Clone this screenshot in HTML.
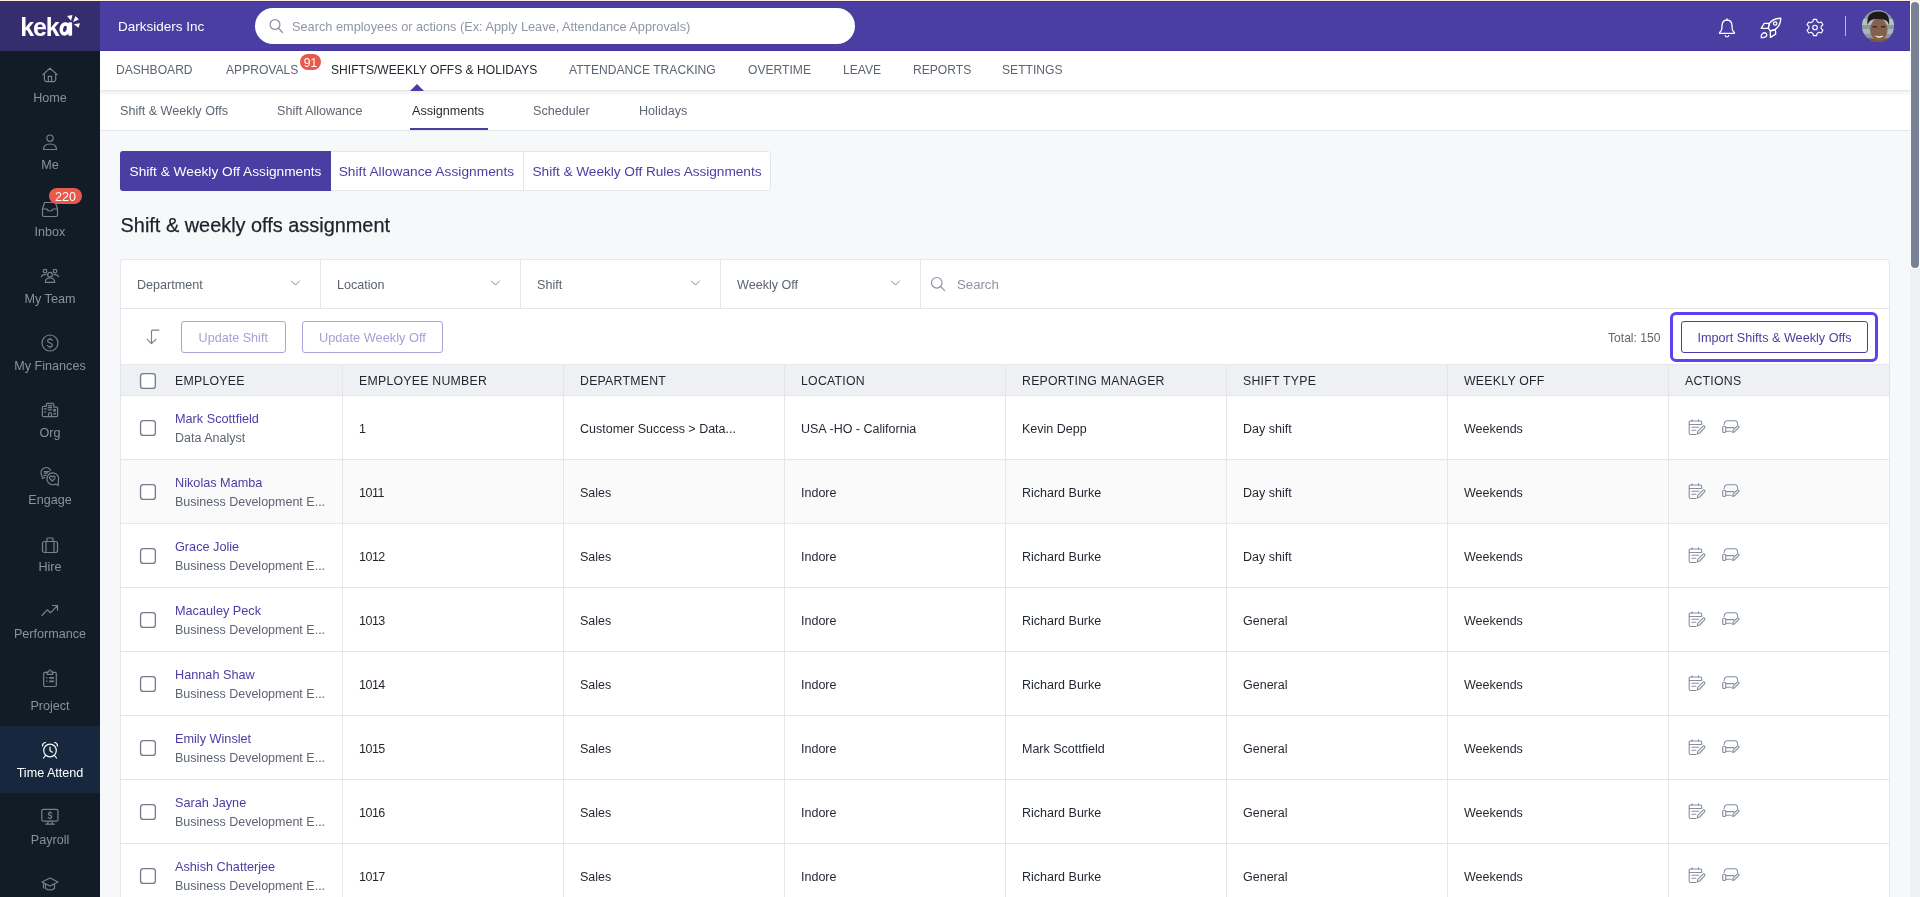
<!DOCTYPE html>
<html><head><meta charset="utf-8"><title>Keka</title>
<style>
html,body{margin:0;padding:0;}
body{width:1920px;height:897px;overflow:hidden;position:relative;background:#f7f8fa;font-family:"Liberation Sans", sans-serif;}
.t{position:absolute;white-space:nowrap;line-height:1;font-family:"Liberation Sans", sans-serif;}
</style></head><body>
<div id="root" style="position:absolute;left:0;top:0;width:1920px;height:897px;will-change:transform">
<div style="position:absolute;left:0;top:0;width:1920px;height:1px;background:#feeee2"></div>
<div style="position:absolute;left:0;top:1px;width:1910px;height:50px;background:#4b3ea2"></div>
<div style="position:absolute;left:0;top:1px;width:1910px;height:1px;background:#3f349c"></div>
<div style="position:absolute;left:100px;top:50px;width:1810px;height:1px;background:#4235a0"></div>
<div style="position:absolute;left:0;top:1px;width:100px;height:50px;background:#362d6f"></div>
<svg style="position:absolute;left:0;top:0" width="100" height="51" viewBox="0 0 100 51">
<g font-family="Liberation Sans" font-weight="bold" font-size="25" fill="#fff">
<text x="20.2" y="35.75">k</text><text x="32.9" y="35.75">e</text><text x="45.8" y="35.75">k</text></g>
<ellipse cx="64.9" cy="28.9" rx="3.55" ry="5.0" transform="rotate(12 64.9 28.9)" fill="none" stroke="#fff" stroke-width="3.6"/><rect x="68.3" y="22.3" width="3.8" height="13.45" rx="1" fill="#fff"/>
<path d="M67.1 16.1 L72.5 15 L71 20.8 Z M75.5 15.9 L78.9 19.6 L73 22 Z M73.7 24.2 L79.9 23.2 L78.6 27.7 Z" fill="#fff"/>
</svg>
<div class="t" style="left:118px;top:19.57px;font-size:13.5px;color:#ffffff;">Darksiders Inc</div>
<div style="position:absolute;left:255px;top:8px;width:600px;height:36px;border-radius:18px;background:#fff"></div>
<svg style="position:absolute;left:268px;top:18px" width="16" height="16" viewBox="0 0 16 16"><circle cx="7" cy="6.5" r="4.9" fill="none" stroke="#8a93a0" stroke-width="1.25"/><path d="M10.6 10.3 L14.5 14.5" stroke="#8a93a0" stroke-width="1.3" stroke-linecap="round"/></svg>
<div class="t" style="left:292px;top:21.01px;font-size:12.75px;color:#8f97a3;">Search employees or actions (Ex: Apply Leave, Attendance Approvals)</div>
<svg style="position:absolute;left:1716px;top:16px" width="22" height="24" viewBox="0 0 22 24" fill="none" stroke="#fff" stroke-width="1.3" stroke-linejoin="round" stroke-linecap="round">
<path d="M11 4 C7.8 4 6.2 6.5 6 9.5 L5.8 13 C5.6 14.5 4.5 15.5 3.6 16.5 Q3.2 17.4 4.2 17.4 L17.8 17.4 Q18.8 17.4 18.4 16.5 C17.5 15.5 16.4 14.5 16.2 13 L16 9.5 C15.8 6.5 14.2 4 11 4 Z"/><path d="M11 2.8 L11 4"/><path d="M9.2 19.6 A1.9 1.9 0 0 0 12.8 19.6"/></svg>
<svg style="position:absolute;left:1759px;top:15px" width="24" height="24" viewBox="0 0 24 24" fill="none" stroke="#fff" stroke-width="1.3" stroke-linejoin="round">
<path d="M10.4 8.3 Q14 3.5 21.8 3.2 Q21.5 11 16.2 14.4 L11.5 15.8 L9.3 13.4 Z"/><circle cx="16.2" cy="8.5" r="1.7"/>
<path d="M2.2 13.4 L5.2 8.4 L10.4 8.4 L9.3 13.4 Z"/><path d="M11.4 22.4 L11.3 16 L16.4 14.6 L16.7 19.1 Z"/>
<path d="M2.2 22.6 Q2 19.5 3.5 18.5 Q5.5 17 7.3 18.5 Q8.5 20 7.2 21.5 Q5.5 22.8 2.2 22.6 Z"/></svg>
<svg style="position:absolute;left:1804px;top:16.3px" width="22" height="22" viewBox="0 0 22 22" fill="none" stroke="#fff" stroke-width="1.3" stroke-linejoin="round"><g transform="translate(11 11.5) scale(0.88) translate(-11 -11.5)">
<path d="M9.2 2.2 L12.8 2.2 L13.4 4.8 L15.6 6.1 L18.2 5.3 L20 8.4 L18 10.2 L18 12.8 L20 14.6 L18.2 17.7 L15.6 16.9 L13.4 18.2 L12.8 20.8 L9.2 20.8 L8.6 18.2 L6.4 16.9 L3.8 17.7 L2 14.6 L4 12.8 L4 10.2 L2 8.4 L3.8 5.3 L6.4 6.1 L8.6 4.8 Z"/><circle cx="11" cy="11.5" r="2.6"/></g></svg>
<div style="position:absolute;left:1845px;top:16px;width:1px;height:20px;background:#b9b3e0"></div>
<svg style="position:absolute;left:1862px;top:10px" width="32" height="32" viewBox="0 0 32 32">
<defs><clipPath id="av"><circle cx="16" cy="16" r="16"/></clipPath></defs>
<g clip-path="url(#av)"><rect width="32" height="32" fill="#8a9aa3"/><rect y="9" width="32" height="6" fill="#b3c0c4"/><rect y="19" width="32" height="5" fill="#a9b7bb"/>
<path d="M0 32 L1 29 C5 27.5 10 28.5 16 29 C22 28.5 27 27.5 31 29 L32 32 Z" fill="#8a4f35"/>
<ellipse cx="16.8" cy="19.5" rx="8.8" ry="11" fill="#86604e"/>
<path d="M5.5 15 C4.5 5 9 1.5 16.5 1.5 C24 1.5 28 5 27 15 C26 12 25 10 21 9.5 C17 8.5 12 9 9.5 10 C7.5 11 6.5 12.5 5.5 15 Z" fill="#1d1a19"/>
<path d="M13.6 26.2 Q17.3 28.6 21 26.2 Q17.3 27.2 13.6 26.2 Z" fill="#efe8e2" stroke="#efe8e2" stroke-width="0.8"/>
<rect x="10.5" y="16" width="4.5" height="1.5" fill="#3b2a22"/><rect x="19" y="16" width="4.5" height="1.5" fill="#3b2a22"/>
</g></svg>
<div style="position:absolute;left:1910px;top:1px;width:10px;height:896px;background:#eef0f3"></div>
<div style="position:absolute;left:1910px;top:1px;width:10px;height:268px;background:#fcfcfd"></div>
<div style="position:absolute;left:1911px;top:2px;width:8px;height:266px;border-radius:4px;background:#798295"></div>
<div style="position:absolute;left:0;top:51px;width:100px;height:846px;background:#111c27"></div>
<div style="position:absolute;left:0;top:726px;width:100px;height:67px;background:#17283e"></div>
<svg style="position:absolute;left:36px;top:62px;color:#78818d" width="28" height="28" viewBox="0 0 28 28" fill="none" stroke="#78818d" stroke-width="1.2" stroke-linecap="round" stroke-linejoin="round"><path d="M6.8 12.6 L13.9 6.2 L21.2 12.6 M8.4 11.2 L8.4 18.2 L9.9 19.7 L18.2 19.7 L19.7 18.2 L19.7 11.2 M12.3 19.7 L12.3 14.3 L15.6 14.3 L15.6 19.7"/></svg>
<div class="t" style="left:0;width:100px;text-align:center;top:92.43px;font-size:12.6px;color:#8a929c">Home</div>
<svg style="position:absolute;left:41px;top:133px" width="18" height="18" viewBox="0 0 18 18" fill="none" stroke="#78818d" stroke-width="1.2" stroke-linecap="round" stroke-linejoin="round"><circle cx="9" cy="5.2" r="3.2"/><path d="M2.5 16.5 C2.5 12.5 5 11 9 11 C13 11 15.5 12.5 15.5 16.5 Z"/></svg>
<div class="t" style="left:0;width:100px;text-align:center;top:158.93px;font-size:12.6px;color:#8a929c">Me</div>
<svg style="position:absolute;left:41px;top:200px" width="18" height="18" viewBox="0 0 18 18" fill="none" stroke="#78818d" stroke-width="1.2" stroke-linecap="round" stroke-linejoin="round"><path d="M3.5 2.5 L14.5 2.5 L16.5 9 L16.5 15 Q16.5 16.5 15 16.5 L3 16.5 Q1.5 16.5 1.5 15 L1.5 9 Z M1.5 9 L6 9 Q6.5 11 9 11 Q11.5 11 12 9 L16.5 9"/></svg>
<div class="t" style="left:0;width:100px;text-align:center;top:225.93px;font-size:12.6px;color:#8a929c">Inbox</div>
<svg style="position:absolute;left:36px;top:262px;color:#78818d" width="28" height="28" viewBox="0 0 28 28" fill="none" stroke="#78818d" stroke-width="1.2" stroke-linecap="round" stroke-linejoin="round"><circle cx="9" cy="9.1" r="1.8"/><circle cx="19" cy="9.1" r="1.8"/><circle cx="14" cy="12.8" r="2.4"/><path d="M9.3 20.3 C9.3 17.5 11.5 16 14 16 C16.5 16 18.7 17.5 18.7 20.3 Z"/><path d="M5.4 14.6 Q6.5 12.3 10 12.3 M22.6 14.6 Q21.5 12.3 18 12.3"/></svg>
<div class="t" style="left:0;width:100px;text-align:center;top:292.93px;font-size:12.6px;color:#8a929c">My Team</div>
<svg style="position:absolute;left:41px;top:334px" width="18" height="18" viewBox="0 0 18 18" fill="none" stroke="#78818d" stroke-width="1.2" stroke-linecap="round" stroke-linejoin="round"><circle cx="9" cy="9" r="8"/><path d="M11.3 6.3 C10.8 5.5 10 5.2 9 5.2 C7.5 5.2 6.6 6 6.6 7 C6.6 9.6 11.4 8.4 11.4 11 C11.4 12.1 10.4 12.8 9 12.8 C7.8 12.8 6.9 12.3 6.5 11.5 M9 4 L9 5.2 M9 12.8 L9 14"/></svg>
<div class="t" style="left:0;width:100px;text-align:center;top:359.93px;font-size:12.6px;color:#8a929c">My Finances</div>
<svg style="position:absolute;left:36px;top:396px;color:#78818d" width="28" height="28" viewBox="0 0 28 28" fill="none" stroke="#78818d" stroke-width="1.2" stroke-linecap="round" stroke-linejoin="round"><path d="M6.4 19.5 L6.4 11.4 Q6.4 10.3 7.5 10.3 L10.3 10.3 L10.3 8.4 Q10.3 7.3 11.4 7.3 L16.7 7.3 Q17.8 7.3 17.8 8.4 L17.8 11.1 L20.5 11.1 Q21.6 11.1 21.6 12.2 L21.6 19.5 Q21.6 20.6 20.5 20.6 L7.5 20.6 Q6.4 20.6 6.4 19.5 Z"/><path d="M12.5 20.6 L12.5 18.2 Q12.5 16.6 14 16.6 Q15.5 16.6 15.5 18.2 L15.5 20.6"/><path d="M12.2 9.6 L15.8 9.6 M12.2 11.7 L15.8 11.7 M12.2 13.8 L15.8 13.8"/><path d="M8.4 12.6 Q9.3 13.8 10.3 12.6 M8.3 16 L10 16"/><circle cx="18.6" cy="14.3" r="0.9"/><path d="M17.7 17.5 Q18.7 18.7 19.7 17.5"/></svg>
<div class="t" style="left:0;width:100px;text-align:center;top:426.93px;font-size:12.6px;color:#8a929c">Org</div>
<svg style="position:absolute;left:36px;top:462px;color:#78818d" width="28" height="28" viewBox="0 0 28 28" fill="none" stroke="#78818d" stroke-width="1.2" stroke-linecap="round" stroke-linejoin="round"><path d="M14.7 8.4 A5.1 5.1 0 1 0 5.9 13.5 L6.4 16.4 L8.8 15.3"/><path d="M8.3 9.7 L13 9.7 M8.3 11.1 L11.5 11.1 M8 13.4 L10 13.4"/><path d="M22.3 19 A5.9 5.9 0 1 0 19.8 21.9 L22.3 23.6 Z"/><path d="M16.3 19 L13.9 16.6 Q13 15.4 14 14.4 Q15.2 13.6 16.3 14.8 Q17.4 13.6 18.6 14.4 Q19.6 15.4 18.7 16.6 Z"/></svg>
<div class="t" style="left:0;width:100px;text-align:center;top:493.93px;font-size:12.6px;color:#8a929c">Engage</div>
<svg style="position:absolute;left:41px;top:536px" width="18" height="18" viewBox="0 0 18 18" fill="none" stroke="#78818d" stroke-width="1.2" stroke-linecap="round" stroke-linejoin="round"><rect x="1.5" y="5.5" width="15" height="11" rx="2"/><path d="M6 5.5 L6 2.8 Q6 2 6.8 2 L11.2 2 Q12 2 12 2.8 L12 5.5 M5 5.5 L5 16.5 M13 5.5 L13 16.5"/></svg>
<div class="t" style="left:0;width:100px;text-align:center;top:560.93px;font-size:12.6px;color:#8a929c">Hire</div>
<svg style="position:absolute;left:41px;top:604px" width="18" height="18" viewBox="0 0 18 18" fill="none" stroke="#78818d" stroke-width="1.2" stroke-linecap="round" stroke-linejoin="round"><path d="M1 11.5 L6.2 5.8 L9.5 8.8 L16.2 1.8 M11.6 1.5 L16.5 1.5 L16.5 6.3"/></svg>
<div class="t" style="left:0;width:100px;text-align:center;top:627.93px;font-size:12.6px;color:#8a929c">Performance</div>
<svg style="position:absolute;left:36px;top:662px;color:#78818d" width="28" height="28" viewBox="0 0 28 28" fill="none" stroke="#78818d" stroke-width="1.2" stroke-linecap="round" stroke-linejoin="round"><path d="M11 10.3 L8.9 10.3 Q7.7 10.3 7.7 11.5 L7.7 23.3 Q7.7 24.5 8.9 24.5 L19.1 24.5 Q20.3 24.5 20.3 23.3 L20.3 11.5 Q20.3 10.3 19.1 10.3 L17 10.3"/><path d="M11.2 12.3 L11.2 10.6 Q11.2 9.9 11.9 9.9 L12.6 9.9 Q12.7 8 14 8 Q15.3 8 15.4 9.9 L16.1 9.9 Q16.8 9.9 16.8 10.6 L16.8 12.3 Z"/><rect x="10.2" y="15.2" width="1.3" height="1.3" fill="currentColor" stroke="none"/><rect x="10.2" y="18.6" width="1.3" height="1.3" fill="currentColor" stroke="none"/><path d="M13.2 15.9 L17.9 15.9 M13.2 19.3 L17.9 19.3" stroke-width="1.7" stroke-linecap="butt"/></svg>
<div class="t" style="left:0;width:100px;text-align:center;top:699.93px;font-size:12.6px;color:#8a929c">Project</div>
<svg style="position:absolute;left:41px;top:741px" width="18" height="18" viewBox="0 0 18 18" fill="none" stroke="#ffffff" stroke-width="1.2" stroke-linecap="round" stroke-linejoin="round"><circle cx="9" cy="9.5" r="6.3"/><path d="M9 6.2 L9 9.8 L11.4 11.2 M1.5 5 Q1.5 1.8 4.5 1.5 M16.5 5 Q16.5 1.8 13.5 1.5 M4.5 14.5 L2.5 17 M13.5 14.5 L15.5 17"/></svg>
<div class="t" style="left:0;width:100px;text-align:center;top:766.93px;font-size:12.6px;color:#ffffff">Time Attend</div>
<svg style="position:absolute;left:36px;top:802px;color:#78818d" width="28" height="28" viewBox="0 0 28 28" fill="none" stroke="#78818d" stroke-width="1.2" stroke-linecap="round" stroke-linejoin="round"><rect x="5.8" y="7.3" width="16.2" height="11.9" rx="1.6"/><path d="M12.4 19.4 L11.4 21.9 M15.6 19.4 L16.6 21.9 M9.6 22.2 L18.4 22.2"/><path d="M15.7 11.4 Q15 10.6 14 10.6 Q12.3 10.6 12.3 11.9 Q12.3 13 14 13.3 Q15.8 13.6 15.8 14.9 Q15.8 16.2 14 16.2 Q12.9 16.2 12.2 15.4 M14 9.7 L14 10.6 M14 16.2 L14 17.1"/></svg>
<div class="t" style="left:0;width:100px;text-align:center;top:833.93px;font-size:12.6px;color:#8a929c">Payroll</div>
<svg style="position:absolute;left:41px;top:876px" width="18" height="18" viewBox="0 0 18 18" fill="none" stroke="#78818d" stroke-width="1.2" stroke-linecap="round" stroke-linejoin="round"><path d="M1 6 L9 2 L17 6 L9 10 Z M4.5 8 L4.5 12.5 Q9 15.5 13.5 12.5 L13.5 8 M2.5 7 L2.5 12"/></svg>
<div style="position:absolute;left:49px;top:188px;width:33px;height:16px;border-radius:8px;background:#e8594c"></div>
<div class="t" style="left:49px;width:33px;text-align:center;top:191.12px;font-size:12.5px;color:#fff">220</div>
<div style="position:absolute;left:100px;top:51px;width:1810px;height:39px;background:#fff"></div>
<div style="position:absolute;left:100px;top:90px;width:1810px;height:1px;background:#e4e6ea"></div>
<div style="position:absolute;left:100px;top:91px;width:1810px;height:40px;background:#fff"></div>
<div style="position:absolute;left:100px;top:91px;width:1810px;height:5px;background:linear-gradient(#eef0f3,rgba(255,255,255,0))"></div>
<div style="position:absolute;left:100px;top:130px;width:1810px;height:1px;background:#e4e6ea"></div>
<div class="t" style="left:116px;top:64.06px;font-size:12.1px;color:#5b6573;">DASHBOARD</div>
<div class="t" style="left:226px;top:64.06px;font-size:12.1px;color:#5b6573;">APPROVALS</div>
<div class="t" style="left:331px;top:64.06px;font-size:12.1px;color:#242a32;">SHIFTS/WEEKLY OFFS &amp; HOLIDAYS</div>
<div class="t" style="left:569px;top:64.06px;font-size:12.1px;color:#5b6573;">ATTENDANCE TRACKING</div>
<div class="t" style="left:748px;top:64.06px;font-size:12.1px;color:#5b6573;">OVERTIME</div>
<div class="t" style="left:843px;top:64.06px;font-size:12.1px;color:#5b6573;">LEAVE</div>
<div class="t" style="left:913px;top:64.06px;font-size:12.1px;color:#5b6573;">REPORTS</div>
<div class="t" style="left:1002px;top:64.06px;font-size:12.1px;color:#5b6573;">SETTINGS</div>
<div style="position:absolute;left:300px;top:54px;width:21px;height:16px;border-radius:8px;background:#e8584b"></div>
<div class="t" style="left:300px;width:21px;text-align:center;top:56.84px;font-size:12px;color:#fff">91</div>
<svg style="position:absolute;left:410px;top:84px" width="14" height="7" viewBox="0 0 14 7"><path d="M0 7 L7 0 L14 7 Z" fill="#4b3ea2"/></svg>
<div class="t" style="left:120px;top:105.13px;font-size:12.6px;color:#5d6673;">Shift &amp; Weekly Offs</div>
<div class="t" style="left:277px;top:105.13px;font-size:12.6px;color:#5d6673;">Shift Allowance</div>
<div class="t" style="left:412px;top:105.13px;font-size:12.6px;color:#1f262e;">Assignments</div>
<div class="t" style="left:533px;top:105.13px;font-size:12.6px;color:#5d6673;">Scheduler</div>
<div class="t" style="left:639px;top:105.13px;font-size:12.6px;color:#5d6673;">Holidays</div>
<div style="position:absolute;left:410px;top:128px;width:78px;height:2px;background:#4b3ea2"></div>
<div style="position:absolute;left:120px;top:151px;width:649px;height:38px;border:1px solid #e4e6ea;border-radius:3px;background:#fff"></div>
<div style="position:absolute;left:120px;top:151px;width:211px;height:40px;border-radius:3px 0 0 3px;background:#4b3ea2"></div>
<div style="position:absolute;left:523px;top:152px;width:1px;height:38px;background:#e4e6ea"></div>
<div class="t" style="left:129.5px;top:164.70px;font-size:13.7px;color:#ffffff;">Shift &amp; Weekly Off Assignments</div>
<div class="t" style="left:338.7px;top:164.70px;font-size:13.7px;color:#4b3ea2;letter-spacing:0.05px;">Shift Allowance Assignments</div>
<div class="t" style="left:532.5px;top:164.70px;font-size:13.7px;color:#4b3ea2;letter-spacing:-0.05px;">Shift &amp; Weekly Off Rules Assignments</div>
<div class="t" style="left:120.6px;top:216.35px;font-size:19.9px;color:#1b222b;-webkit-text-stroke:0.25px #1b222b;">Shift &amp; weekly offs assignment</div>
<div style="position:absolute;left:120px;top:259px;width:1768px;height:700px;border:1px solid #e4e6ea;border-radius:3px;background:#fff"></div>
<div style="position:absolute;left:121px;top:308px;width:1768px;height:1px;background:#e4e6ea"></div>
<div style="position:absolute;left:320px;top:260px;width:1px;height:48px;background:#e4e6ea"></div>
<div style="position:absolute;left:520px;top:260px;width:1px;height:48px;background:#e4e6ea"></div>
<div style="position:absolute;left:720px;top:260px;width:1px;height:48px;background:#e4e6ea"></div>
<div style="position:absolute;left:920px;top:260px;width:1px;height:48px;background:#e4e6ea"></div>
<div class="t" style="left:137px;top:278.73px;font-size:12.6px;color:#5b6470;">Department</div>
<svg style="position:absolute;left:290px;top:279px" width="11" height="8" viewBox="0 0 11 8"><path d="M1.5 2 L5.5 6 L9.5 2" fill="none" stroke="#7a8390" stroke-width="1.0" stroke-linecap="round" stroke-linejoin="round"/></svg>
<div class="t" style="left:337px;top:278.73px;font-size:12.6px;color:#5b6470;">Location</div>
<svg style="position:absolute;left:490px;top:279px" width="11" height="8" viewBox="0 0 11 8"><path d="M1.5 2 L5.5 6 L9.5 2" fill="none" stroke="#7a8390" stroke-width="1.0" stroke-linecap="round" stroke-linejoin="round"/></svg>
<div class="t" style="left:537px;top:278.73px;font-size:12.6px;color:#5b6470;">Shift</div>
<svg style="position:absolute;left:690px;top:279px" width="11" height="8" viewBox="0 0 11 8"><path d="M1.5 2 L5.5 6 L9.5 2" fill="none" stroke="#7a8390" stroke-width="1.0" stroke-linecap="round" stroke-linejoin="round"/></svg>
<div class="t" style="left:737px;top:278.73px;font-size:12.6px;color:#5b6470;">Weekly Off</div>
<svg style="position:absolute;left:890px;top:279px" width="11" height="8" viewBox="0 0 11 8"><path d="M1.5 2 L5.5 6 L9.5 2" fill="none" stroke="#7a8390" stroke-width="1.0" stroke-linecap="round" stroke-linejoin="round"/></svg>
<svg style="position:absolute;left:930px;top:276px" width="16" height="16" viewBox="0 0 16 16"><circle cx="6.8" cy="6.8" r="5.3" fill="none" stroke="#8a93a0" stroke-width="1.2"/><path d="M10.7 10.7 L14.6 14.6" stroke="#8a93a0" stroke-width="1.2" stroke-linecap="round"/></svg>
<div class="t" style="left:957px;top:278.23px;font-size:13.2px;color:#8a93a0;">Search</div>
<svg style="position:absolute;left:138px;top:322px" width="30" height="30" viewBox="0 0 30 30" fill="none" stroke="#748093" stroke-width="1.15" stroke-linecap="round" stroke-linejoin="round"><path d="M20.9 8.1 L14.8 8.1 Q13.5 8.1 13.5 9.4 L13.5 21.6 M9.2 17.4 L13.5 21.7 L17.9 17.4"/></svg>
<div style="position:absolute;left:181px;top:321px;width:103px;height:30px;border:1px solid #aaa4da;border-radius:3px"></div>
<div class="t" style="left:198.6px;top:331.73px;font-size:12.6px;color:#a6a0d8;">Update Shift</div>
<div style="position:absolute;left:302px;top:321px;width:139px;height:30px;border:1px solid #aaa4da;border-radius:3px"></div>
<div class="t" style="left:318.9px;top:331.56px;font-size:12.8px;color:#a6a0d8;">Update Weekly Off</div>
<div class="t" style="left:1608px;top:332.16px;font-size:12.1px;color:#5f6670;">Total: 150</div>
<div style="position:absolute;left:1670px;top:312px;width:202px;height:44px;border:3px solid #5b43f2;border-radius:6px"></div>
<div style="position:absolute;left:1681px;top:321px;width:185px;height:30px;border:1px solid #4b3ea2;border-radius:3px"></div>
<div class="t" style="left:1697.5px;top:331.69px;font-size:12.65px;color:#4b3ea2;">Import Shifts &amp; Weekly Offs</div>
<div style="position:absolute;left:121px;top:365px;width:1768px;height:30px;background:#eef0f4"></div>
<div style="position:absolute;left:121px;top:395px;width:1768px;height:1px;background:#e4e6ea"></div>
<div style="position:absolute;left:120px;top:364px;width:1769px;height:1px;background:#e6e8ec"></div>
<div class="t" style="left:175px;top:374.79px;font-size:12.3px;color:#1e252d;letter-spacing:0.25px;">EMPLOYEE</div>
<div class="t" style="left:359px;top:374.79px;font-size:12.3px;color:#1e252d;letter-spacing:0.25px;">EMPLOYEE NUMBER</div>
<div class="t" style="left:580px;top:374.79px;font-size:12.3px;color:#1e252d;letter-spacing:0.25px;">DEPARTMENT</div>
<div class="t" style="left:801px;top:374.79px;font-size:12.3px;color:#1e252d;letter-spacing:0.25px;">LOCATION</div>
<div class="t" style="left:1022px;top:374.79px;font-size:12.3px;color:#1e252d;letter-spacing:0.25px;">REPORTING MANAGER</div>
<div class="t" style="left:1243px;top:374.79px;font-size:12.3px;color:#1e252d;letter-spacing:0.25px;">SHIFT TYPE</div>
<div class="t" style="left:1464px;top:374.79px;font-size:12.3px;color:#1e252d;letter-spacing:0.25px;">WEEKLY OFF</div>
<div class="t" style="left:1685px;top:374.79px;font-size:12.3px;color:#1e252d;letter-spacing:0.25px;">ACTIONS</div>
<div style="position:absolute;left:121px;top:459px;width:1768px;height:64px;background:#fafafb"></div>
<div style="position:absolute;left:342px;top:365px;width:1px;height:532px;background:#e4e6ea"></div>
<div style="position:absolute;left:563px;top:365px;width:1px;height:532px;background:#e4e6ea"></div>
<div style="position:absolute;left:784px;top:365px;width:1px;height:532px;background:#e4e6ea"></div>
<div style="position:absolute;left:1005px;top:365px;width:1px;height:532px;background:#e4e6ea"></div>
<div style="position:absolute;left:1226px;top:365px;width:1px;height:532px;background:#e4e6ea"></div>
<div style="position:absolute;left:1447px;top:365px;width:1px;height:532px;background:#e4e6ea"></div>
<div style="position:absolute;left:1668px;top:365px;width:1px;height:532px;background:#e4e6ea"></div>
<svg style="position:absolute;left:139px;top:372px" width="18" height="18" viewBox="0 0 18 18"><rect x="1.55" y="1.6" width="14.8" height="14.8" rx="2.7" fill="#fff" stroke="#737d8e" stroke-width="1.35"/></svg>
<div style="position:absolute;left:121px;top:459px;width:1768px;height:1px;background:#e4e6ea"></div>
<svg style="position:absolute;left:139px;top:419px" width="18" height="18" viewBox="0 0 18 18"><rect x="1.55" y="1.6" width="14.8" height="14.8" rx="2.7" fill="#fff" stroke="#737d8e" stroke-width="1.35"/></svg>
<div class="t" style="left:175px;top:412.65px;font-size:12.7px;color:#4b3ea2;">Mark Scottfield</div>
<div class="t" style="left:175px;top:431.62px;font-size:12.5px;color:#5d6570;">Data Analyst</div>
<div class="t" style="left:359px;top:422.82px;font-size:12.5px;color:#1f2630;">1</div>
<div class="t" style="left:580px;top:422.82px;font-size:12.5px;color:#1f2630;">Customer Success &gt; Data...</div>
<div class="t" style="left:801px;top:422.82px;font-size:12.5px;color:#1f2630;">USA -HO - California</div>
<div class="t" style="left:1022px;top:422.82px;font-size:12.5px;color:#1f2630;">Kevin Depp</div>
<div class="t" style="left:1243px;top:422.82px;font-size:12.5px;color:#1f2630;">Day shift</div>
<div class="t" style="left:1464px;top:422.82px;font-size:12.5px;color:#1f2630;">Weekends</div>
<svg style="position:absolute;left:1688px;top:419px" width="18" height="17" viewBox="0 0 18 17" fill="none" stroke="#858e9d" stroke-width="1.1" stroke-linecap="round" stroke-linejoin="round"><path d="M8 15.5 L2.5 15.5 Q1.2 15.5 1.2 14 L1.2 3.5 Q1.2 2 2.5 2 L12.3 2 Q13.7 2 13.7 3.5 L13.7 5.5 M1.2 5.5 L13.7 5.5 M4 0.8 L4 2.5 M10.5 0.8 L10.5 2.5 M3.8 8.3 L10.8 8.3 M3.8 11.3 L7.8 11.3"/><path d="M9.2 15 L9.8 12.3 L15 7.2 Q15.9 6.5 16.6 7.2 Q17.3 8 16.6 8.8 L11.6 14 Z"/></svg>
<svg style="position:absolute;left:1722px;top:420px" width="18" height="14" viewBox="0 0 18 14" fill="none" stroke="#858e9d" stroke-width="1.1" stroke-linecap="round" stroke-linejoin="round"><path d="M2.1 4.6 Q2.5 0.8 5.5 0.8 L13 0.8 Q15.3 0.8 15.7 4.6"/><rect x="0.7" y="6.2" width="3" height="6.3" rx="1.3"/><path d="M3.7 7.6 L11.8 7.6 M3.7 11.3 L9 11.3"/><path d="M10.6 12.4 L11 10.4 L15.2 6.2 Q15.9 5.5 16.6 6.2 Q17.3 6.9 16.6 7.6 L12.5 11.9 Z"/></svg>
<div style="position:absolute;left:121px;top:523px;width:1768px;height:1px;background:#e4e6ea"></div>
<svg style="position:absolute;left:139px;top:483px" width="18" height="18" viewBox="0 0 18 18"><rect x="1.55" y="1.6" width="14.8" height="14.8" rx="2.7" fill="#fff" stroke="#737d8e" stroke-width="1.35"/></svg>
<div class="t" style="left:175px;top:476.65px;font-size:12.7px;color:#4b3ea2;">Nikolas Mamba</div>
<div class="t" style="left:175px;top:495.62px;font-size:12.5px;color:#5d6570;">Business Development E...</div>
<div class="t" style="left:359px;top:486.82px;font-size:12.5px;color:#1f2630;letter-spacing:-0.5px;">1011</div>
<div class="t" style="left:580px;top:486.82px;font-size:12.5px;color:#1f2630;">Sales</div>
<div class="t" style="left:801px;top:486.82px;font-size:12.5px;color:#1f2630;">Indore</div>
<div class="t" style="left:1022px;top:486.82px;font-size:12.5px;color:#1f2630;">Richard Burke</div>
<div class="t" style="left:1243px;top:486.82px;font-size:12.5px;color:#1f2630;">Day shift</div>
<div class="t" style="left:1464px;top:486.82px;font-size:12.5px;color:#1f2630;">Weekends</div>
<svg style="position:absolute;left:1688px;top:483px" width="18" height="17" viewBox="0 0 18 17" fill="none" stroke="#858e9d" stroke-width="1.1" stroke-linecap="round" stroke-linejoin="round"><path d="M8 15.5 L2.5 15.5 Q1.2 15.5 1.2 14 L1.2 3.5 Q1.2 2 2.5 2 L12.3 2 Q13.7 2 13.7 3.5 L13.7 5.5 M1.2 5.5 L13.7 5.5 M4 0.8 L4 2.5 M10.5 0.8 L10.5 2.5 M3.8 8.3 L10.8 8.3 M3.8 11.3 L7.8 11.3"/><path d="M9.2 15 L9.8 12.3 L15 7.2 Q15.9 6.5 16.6 7.2 Q17.3 8 16.6 8.8 L11.6 14 Z"/></svg>
<svg style="position:absolute;left:1722px;top:484px" width="18" height="14" viewBox="0 0 18 14" fill="none" stroke="#858e9d" stroke-width="1.1" stroke-linecap="round" stroke-linejoin="round"><path d="M2.1 4.6 Q2.5 0.8 5.5 0.8 L13 0.8 Q15.3 0.8 15.7 4.6"/><rect x="0.7" y="6.2" width="3" height="6.3" rx="1.3"/><path d="M3.7 7.6 L11.8 7.6 M3.7 11.3 L9 11.3"/><path d="M10.6 12.4 L11 10.4 L15.2 6.2 Q15.9 5.5 16.6 6.2 Q17.3 6.9 16.6 7.6 L12.5 11.9 Z"/></svg>
<div style="position:absolute;left:121px;top:587px;width:1768px;height:1px;background:#e4e6ea"></div>
<svg style="position:absolute;left:139px;top:547px" width="18" height="18" viewBox="0 0 18 18"><rect x="1.55" y="1.6" width="14.8" height="14.8" rx="2.7" fill="#fff" stroke="#737d8e" stroke-width="1.35"/></svg>
<div class="t" style="left:175px;top:540.65px;font-size:12.7px;color:#4b3ea2;">Grace Jolie</div>
<div class="t" style="left:175px;top:559.62px;font-size:12.5px;color:#5d6570;">Business Development E...</div>
<div class="t" style="left:359px;top:550.82px;font-size:12.5px;color:#1f2630;letter-spacing:-0.5px;">1012</div>
<div class="t" style="left:580px;top:550.82px;font-size:12.5px;color:#1f2630;">Sales</div>
<div class="t" style="left:801px;top:550.82px;font-size:12.5px;color:#1f2630;">Indore</div>
<div class="t" style="left:1022px;top:550.82px;font-size:12.5px;color:#1f2630;">Richard Burke</div>
<div class="t" style="left:1243px;top:550.82px;font-size:12.5px;color:#1f2630;">Day shift</div>
<div class="t" style="left:1464px;top:550.82px;font-size:12.5px;color:#1f2630;">Weekends</div>
<svg style="position:absolute;left:1688px;top:547px" width="18" height="17" viewBox="0 0 18 17" fill="none" stroke="#858e9d" stroke-width="1.1" stroke-linecap="round" stroke-linejoin="round"><path d="M8 15.5 L2.5 15.5 Q1.2 15.5 1.2 14 L1.2 3.5 Q1.2 2 2.5 2 L12.3 2 Q13.7 2 13.7 3.5 L13.7 5.5 M1.2 5.5 L13.7 5.5 M4 0.8 L4 2.5 M10.5 0.8 L10.5 2.5 M3.8 8.3 L10.8 8.3 M3.8 11.3 L7.8 11.3"/><path d="M9.2 15 L9.8 12.3 L15 7.2 Q15.9 6.5 16.6 7.2 Q17.3 8 16.6 8.8 L11.6 14 Z"/></svg>
<svg style="position:absolute;left:1722px;top:548px" width="18" height="14" viewBox="0 0 18 14" fill="none" stroke="#858e9d" stroke-width="1.1" stroke-linecap="round" stroke-linejoin="round"><path d="M2.1 4.6 Q2.5 0.8 5.5 0.8 L13 0.8 Q15.3 0.8 15.7 4.6"/><rect x="0.7" y="6.2" width="3" height="6.3" rx="1.3"/><path d="M3.7 7.6 L11.8 7.6 M3.7 11.3 L9 11.3"/><path d="M10.6 12.4 L11 10.4 L15.2 6.2 Q15.9 5.5 16.6 6.2 Q17.3 6.9 16.6 7.6 L12.5 11.9 Z"/></svg>
<div style="position:absolute;left:121px;top:651px;width:1768px;height:1px;background:#e4e6ea"></div>
<svg style="position:absolute;left:139px;top:611px" width="18" height="18" viewBox="0 0 18 18"><rect x="1.55" y="1.6" width="14.8" height="14.8" rx="2.7" fill="#fff" stroke="#737d8e" stroke-width="1.35"/></svg>
<div class="t" style="left:175px;top:604.65px;font-size:12.7px;color:#4b3ea2;">Macauley Peck</div>
<div class="t" style="left:175px;top:623.62px;font-size:12.5px;color:#5d6570;">Business Development E...</div>
<div class="t" style="left:359px;top:614.82px;font-size:12.5px;color:#1f2630;letter-spacing:-0.5px;">1013</div>
<div class="t" style="left:580px;top:614.82px;font-size:12.5px;color:#1f2630;">Sales</div>
<div class="t" style="left:801px;top:614.82px;font-size:12.5px;color:#1f2630;">Indore</div>
<div class="t" style="left:1022px;top:614.82px;font-size:12.5px;color:#1f2630;">Richard Burke</div>
<div class="t" style="left:1243px;top:614.82px;font-size:12.5px;color:#1f2630;">General</div>
<div class="t" style="left:1464px;top:614.82px;font-size:12.5px;color:#1f2630;">Weekends</div>
<svg style="position:absolute;left:1688px;top:611px" width="18" height="17" viewBox="0 0 18 17" fill="none" stroke="#858e9d" stroke-width="1.1" stroke-linecap="round" stroke-linejoin="round"><path d="M8 15.5 L2.5 15.5 Q1.2 15.5 1.2 14 L1.2 3.5 Q1.2 2 2.5 2 L12.3 2 Q13.7 2 13.7 3.5 L13.7 5.5 M1.2 5.5 L13.7 5.5 M4 0.8 L4 2.5 M10.5 0.8 L10.5 2.5 M3.8 8.3 L10.8 8.3 M3.8 11.3 L7.8 11.3"/><path d="M9.2 15 L9.8 12.3 L15 7.2 Q15.9 6.5 16.6 7.2 Q17.3 8 16.6 8.8 L11.6 14 Z"/></svg>
<svg style="position:absolute;left:1722px;top:612px" width="18" height="14" viewBox="0 0 18 14" fill="none" stroke="#858e9d" stroke-width="1.1" stroke-linecap="round" stroke-linejoin="round"><path d="M2.1 4.6 Q2.5 0.8 5.5 0.8 L13 0.8 Q15.3 0.8 15.7 4.6"/><rect x="0.7" y="6.2" width="3" height="6.3" rx="1.3"/><path d="M3.7 7.6 L11.8 7.6 M3.7 11.3 L9 11.3"/><path d="M10.6 12.4 L11 10.4 L15.2 6.2 Q15.9 5.5 16.6 6.2 Q17.3 6.9 16.6 7.6 L12.5 11.9 Z"/></svg>
<div style="position:absolute;left:121px;top:715px;width:1768px;height:1px;background:#e4e6ea"></div>
<svg style="position:absolute;left:139px;top:675px" width="18" height="18" viewBox="0 0 18 18"><rect x="1.55" y="1.6" width="14.8" height="14.8" rx="2.7" fill="#fff" stroke="#737d8e" stroke-width="1.35"/></svg>
<div class="t" style="left:175px;top:668.65px;font-size:12.7px;color:#4b3ea2;">Hannah Shaw</div>
<div class="t" style="left:175px;top:687.62px;font-size:12.5px;color:#5d6570;">Business Development E...</div>
<div class="t" style="left:359px;top:678.82px;font-size:12.5px;color:#1f2630;letter-spacing:-0.5px;">1014</div>
<div class="t" style="left:580px;top:678.82px;font-size:12.5px;color:#1f2630;">Sales</div>
<div class="t" style="left:801px;top:678.82px;font-size:12.5px;color:#1f2630;">Indore</div>
<div class="t" style="left:1022px;top:678.82px;font-size:12.5px;color:#1f2630;">Richard Burke</div>
<div class="t" style="left:1243px;top:678.82px;font-size:12.5px;color:#1f2630;">General</div>
<div class="t" style="left:1464px;top:678.82px;font-size:12.5px;color:#1f2630;">Weekends</div>
<svg style="position:absolute;left:1688px;top:675px" width="18" height="17" viewBox="0 0 18 17" fill="none" stroke="#858e9d" stroke-width="1.1" stroke-linecap="round" stroke-linejoin="round"><path d="M8 15.5 L2.5 15.5 Q1.2 15.5 1.2 14 L1.2 3.5 Q1.2 2 2.5 2 L12.3 2 Q13.7 2 13.7 3.5 L13.7 5.5 M1.2 5.5 L13.7 5.5 M4 0.8 L4 2.5 M10.5 0.8 L10.5 2.5 M3.8 8.3 L10.8 8.3 M3.8 11.3 L7.8 11.3"/><path d="M9.2 15 L9.8 12.3 L15 7.2 Q15.9 6.5 16.6 7.2 Q17.3 8 16.6 8.8 L11.6 14 Z"/></svg>
<svg style="position:absolute;left:1722px;top:676px" width="18" height="14" viewBox="0 0 18 14" fill="none" stroke="#858e9d" stroke-width="1.1" stroke-linecap="round" stroke-linejoin="round"><path d="M2.1 4.6 Q2.5 0.8 5.5 0.8 L13 0.8 Q15.3 0.8 15.7 4.6"/><rect x="0.7" y="6.2" width="3" height="6.3" rx="1.3"/><path d="M3.7 7.6 L11.8 7.6 M3.7 11.3 L9 11.3"/><path d="M10.6 12.4 L11 10.4 L15.2 6.2 Q15.9 5.5 16.6 6.2 Q17.3 6.9 16.6 7.6 L12.5 11.9 Z"/></svg>
<div style="position:absolute;left:121px;top:779px;width:1768px;height:1px;background:#e4e6ea"></div>
<svg style="position:absolute;left:139px;top:739px" width="18" height="18" viewBox="0 0 18 18"><rect x="1.55" y="1.6" width="14.8" height="14.8" rx="2.7" fill="#fff" stroke="#737d8e" stroke-width="1.35"/></svg>
<div class="t" style="left:175px;top:732.65px;font-size:12.7px;color:#4b3ea2;">Emily Winslet</div>
<div class="t" style="left:175px;top:751.62px;font-size:12.5px;color:#5d6570;">Business Development E...</div>
<div class="t" style="left:359px;top:742.82px;font-size:12.5px;color:#1f2630;letter-spacing:-0.5px;">1015</div>
<div class="t" style="left:580px;top:742.82px;font-size:12.5px;color:#1f2630;">Sales</div>
<div class="t" style="left:801px;top:742.82px;font-size:12.5px;color:#1f2630;">Indore</div>
<div class="t" style="left:1022px;top:742.82px;font-size:12.5px;color:#1f2630;">Mark Scottfield</div>
<div class="t" style="left:1243px;top:742.82px;font-size:12.5px;color:#1f2630;">General</div>
<div class="t" style="left:1464px;top:742.82px;font-size:12.5px;color:#1f2630;">Weekends</div>
<svg style="position:absolute;left:1688px;top:739px" width="18" height="17" viewBox="0 0 18 17" fill="none" stroke="#858e9d" stroke-width="1.1" stroke-linecap="round" stroke-linejoin="round"><path d="M8 15.5 L2.5 15.5 Q1.2 15.5 1.2 14 L1.2 3.5 Q1.2 2 2.5 2 L12.3 2 Q13.7 2 13.7 3.5 L13.7 5.5 M1.2 5.5 L13.7 5.5 M4 0.8 L4 2.5 M10.5 0.8 L10.5 2.5 M3.8 8.3 L10.8 8.3 M3.8 11.3 L7.8 11.3"/><path d="M9.2 15 L9.8 12.3 L15 7.2 Q15.9 6.5 16.6 7.2 Q17.3 8 16.6 8.8 L11.6 14 Z"/></svg>
<svg style="position:absolute;left:1722px;top:740px" width="18" height="14" viewBox="0 0 18 14" fill="none" stroke="#858e9d" stroke-width="1.1" stroke-linecap="round" stroke-linejoin="round"><path d="M2.1 4.6 Q2.5 0.8 5.5 0.8 L13 0.8 Q15.3 0.8 15.7 4.6"/><rect x="0.7" y="6.2" width="3" height="6.3" rx="1.3"/><path d="M3.7 7.6 L11.8 7.6 M3.7 11.3 L9 11.3"/><path d="M10.6 12.4 L11 10.4 L15.2 6.2 Q15.9 5.5 16.6 6.2 Q17.3 6.9 16.6 7.6 L12.5 11.9 Z"/></svg>
<div style="position:absolute;left:121px;top:843px;width:1768px;height:1px;background:#e4e6ea"></div>
<svg style="position:absolute;left:139px;top:803px" width="18" height="18" viewBox="0 0 18 18"><rect x="1.55" y="1.6" width="14.8" height="14.8" rx="2.7" fill="#fff" stroke="#737d8e" stroke-width="1.35"/></svg>
<div class="t" style="left:175px;top:796.65px;font-size:12.7px;color:#4b3ea2;">Sarah Jayne</div>
<div class="t" style="left:175px;top:815.62px;font-size:12.5px;color:#5d6570;">Business Development E...</div>
<div class="t" style="left:359px;top:806.82px;font-size:12.5px;color:#1f2630;letter-spacing:-0.5px;">1016</div>
<div class="t" style="left:580px;top:806.82px;font-size:12.5px;color:#1f2630;">Sales</div>
<div class="t" style="left:801px;top:806.82px;font-size:12.5px;color:#1f2630;">Indore</div>
<div class="t" style="left:1022px;top:806.82px;font-size:12.5px;color:#1f2630;">Richard Burke</div>
<div class="t" style="left:1243px;top:806.82px;font-size:12.5px;color:#1f2630;">General</div>
<div class="t" style="left:1464px;top:806.82px;font-size:12.5px;color:#1f2630;">Weekends</div>
<svg style="position:absolute;left:1688px;top:803px" width="18" height="17" viewBox="0 0 18 17" fill="none" stroke="#858e9d" stroke-width="1.1" stroke-linecap="round" stroke-linejoin="round"><path d="M8 15.5 L2.5 15.5 Q1.2 15.5 1.2 14 L1.2 3.5 Q1.2 2 2.5 2 L12.3 2 Q13.7 2 13.7 3.5 L13.7 5.5 M1.2 5.5 L13.7 5.5 M4 0.8 L4 2.5 M10.5 0.8 L10.5 2.5 M3.8 8.3 L10.8 8.3 M3.8 11.3 L7.8 11.3"/><path d="M9.2 15 L9.8 12.3 L15 7.2 Q15.9 6.5 16.6 7.2 Q17.3 8 16.6 8.8 L11.6 14 Z"/></svg>
<svg style="position:absolute;left:1722px;top:804px" width="18" height="14" viewBox="0 0 18 14" fill="none" stroke="#858e9d" stroke-width="1.1" stroke-linecap="round" stroke-linejoin="round"><path d="M2.1 4.6 Q2.5 0.8 5.5 0.8 L13 0.8 Q15.3 0.8 15.7 4.6"/><rect x="0.7" y="6.2" width="3" height="6.3" rx="1.3"/><path d="M3.7 7.6 L11.8 7.6 M3.7 11.3 L9 11.3"/><path d="M10.6 12.4 L11 10.4 L15.2 6.2 Q15.9 5.5 16.6 6.2 Q17.3 6.9 16.6 7.6 L12.5 11.9 Z"/></svg>
<div style="position:absolute;left:121px;top:907px;width:1768px;height:1px;background:#e4e6ea"></div>
<svg style="position:absolute;left:139px;top:867px" width="18" height="18" viewBox="0 0 18 18"><rect x="1.55" y="1.6" width="14.8" height="14.8" rx="2.7" fill="#fff" stroke="#737d8e" stroke-width="1.35"/></svg>
<div class="t" style="left:175px;top:860.65px;font-size:12.7px;color:#4b3ea2;">Ashish Chatterjee</div>
<div class="t" style="left:175px;top:879.62px;font-size:12.5px;color:#5d6570;">Business Development E...</div>
<div class="t" style="left:359px;top:870.82px;font-size:12.5px;color:#1f2630;letter-spacing:-0.5px;">1017</div>
<div class="t" style="left:580px;top:870.82px;font-size:12.5px;color:#1f2630;">Sales</div>
<div class="t" style="left:801px;top:870.82px;font-size:12.5px;color:#1f2630;">Indore</div>
<div class="t" style="left:1022px;top:870.82px;font-size:12.5px;color:#1f2630;">Richard Burke</div>
<div class="t" style="left:1243px;top:870.82px;font-size:12.5px;color:#1f2630;">General</div>
<div class="t" style="left:1464px;top:870.82px;font-size:12.5px;color:#1f2630;">Weekends</div>
<svg style="position:absolute;left:1688px;top:867px" width="18" height="17" viewBox="0 0 18 17" fill="none" stroke="#858e9d" stroke-width="1.1" stroke-linecap="round" stroke-linejoin="round"><path d="M8 15.5 L2.5 15.5 Q1.2 15.5 1.2 14 L1.2 3.5 Q1.2 2 2.5 2 L12.3 2 Q13.7 2 13.7 3.5 L13.7 5.5 M1.2 5.5 L13.7 5.5 M4 0.8 L4 2.5 M10.5 0.8 L10.5 2.5 M3.8 8.3 L10.8 8.3 M3.8 11.3 L7.8 11.3"/><path d="M9.2 15 L9.8 12.3 L15 7.2 Q15.9 6.5 16.6 7.2 Q17.3 8 16.6 8.8 L11.6 14 Z"/></svg>
<svg style="position:absolute;left:1722px;top:868px" width="18" height="14" viewBox="0 0 18 14" fill="none" stroke="#858e9d" stroke-width="1.1" stroke-linecap="round" stroke-linejoin="round"><path d="M2.1 4.6 Q2.5 0.8 5.5 0.8 L13 0.8 Q15.3 0.8 15.7 4.6"/><rect x="0.7" y="6.2" width="3" height="6.3" rx="1.3"/><path d="M3.7 7.6 L11.8 7.6 M3.7 11.3 L9 11.3"/><path d="M10.6 12.4 L11 10.4 L15.2 6.2 Q15.9 5.5 16.6 6.2 Q17.3 6.9 16.6 7.6 L12.5 11.9 Z"/></svg>
</div>
</body></html>
